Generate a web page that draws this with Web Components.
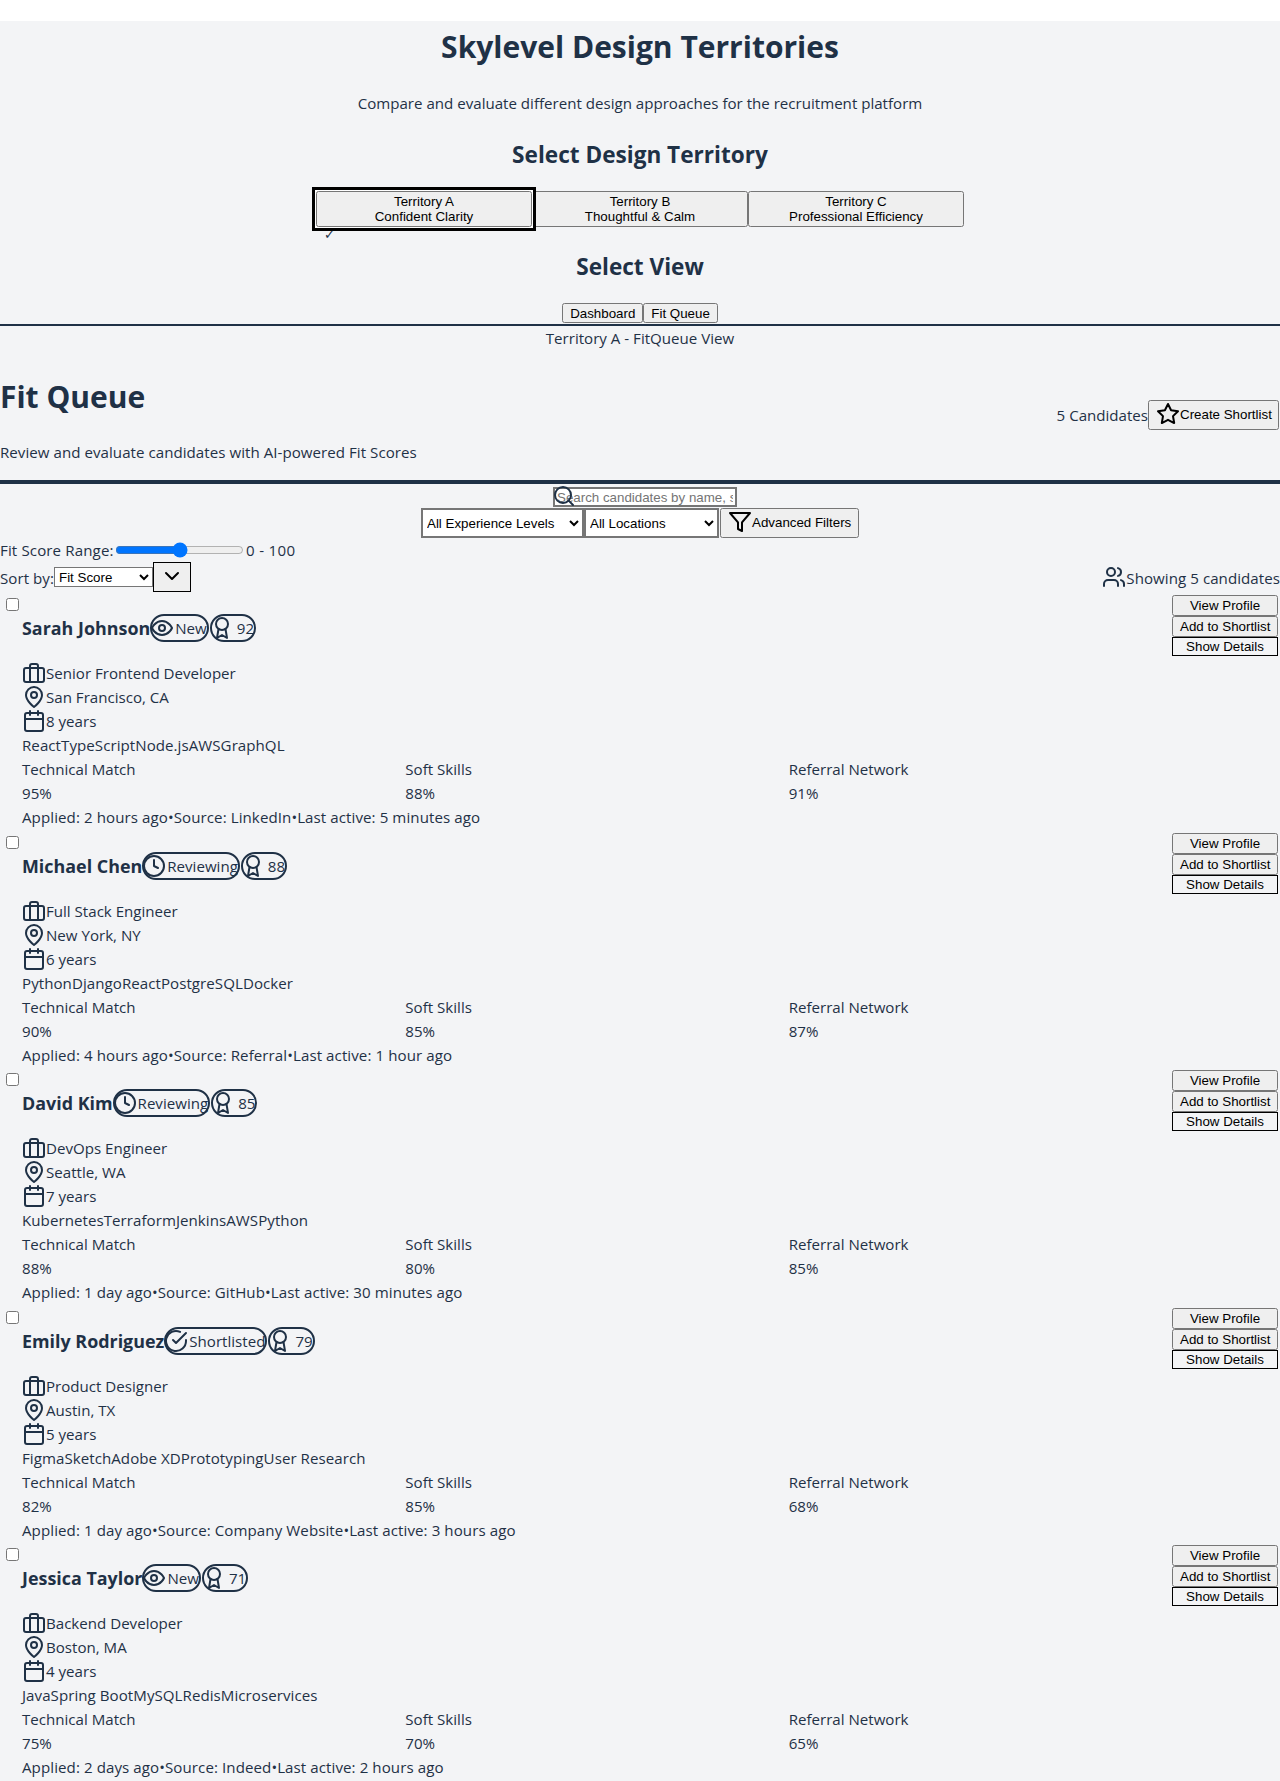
<!DOCTYPE html>
<html lang="en"><head><meta charset="utf-8"><title>Skylevel Design Territories</title>
<style>
html,body{margin:0;padding:0;background:#fff}
body{padding-top:21px}
sky-app{display:block}
</style></head><body>
<sky-app></sky-app>
<script>
const ICONS={
briefcase:'<rect x="2" y="7" width="20" height="14" rx="2"/><path d="M16 21V5a2 2 0 0 0-2-2h-4a2 2 0 0 0-2 2v16"/>',
pin:'<path d="M20 10c0 6-8 12-8 12s-8-6-8-12a8 8 0 0 1 16 0Z"/><circle cx="12" cy="10" r="3"/>',
calendar:'<rect x="3" y="4" width="18" height="18" rx="2"/><path d="M16 2v4M8 2v4M3 10h18"/>',
award:'<circle cx="12" cy="8" r="6"/><path d="M15.477 12.89 17 22l-5-3-5 3 1.523-9.11"/>',
eye:'<path d="M2 12s3-7 10-7 10 7 10 7-3 7-10 7-10-7-10-7Z"/><circle cx="12" cy="12" r="3"/>',
clock:'<circle cx="12" cy="12" r="10"/><path d="M12 6v6l4 2"/>',
check:'<path d="M22 11.08V12a10 10 0 1 1-5.93-9.14"/><path d="M22 4 12 14.01l-3-3"/>',
star:'<path d="M12 2l3.09 6.26L22 9.27l-5 4.87 1.18 6.88L12 17.77l-6.18 3.25L7 14.14 2 9.27l6.91-1.01L12 2Z"/>',
filter:'<path d="M22 3H2l8 9.46V19l4 2v-8.54L22 3Z"/>',
search:'<circle cx="11" cy="11" r="8"/><path d="m21 21-4.35-4.35"/>',
users:'<path d="M16 21v-2a4 4 0 0 0-4-4H6a4 4 0 0 0-4 4v2"/><circle cx="9" cy="7" r="4"/><path d="M22 21v-2a4 4 0 0 0-3-3.87M16 3.13a4 4 0 0 1 0 7.75"/>',
chevron:'<path d="m6 9 6 6 6-6"/>'
};
class SkyIcon extends HTMLElement{
  connectedCallback(){
    if(this.shadowRoot)return;
    const s=this.attachShadow({mode:'open'});
    s.innerHTML=`<style>:host{display:block;width:24px;height:24px;flex:none}svg{display:block}</style>
    <svg width="24" height="24" viewBox="0 0 24 24" fill="none" stroke="currentColor" stroke-width="2" stroke-linecap="round" stroke-linejoin="round">${ICONS[this.getAttribute('name')]}</svg>`;
  }
}
customElements.define('sky-icon',SkyIcon);

const BTN=`button{font:13.333px/15px "Liberation Sans",Arial,sans-serif;color:#000;margin:0;padding:1px 6px;white-space:nowrap}`;

class StatusPill extends HTMLElement{
  connectedCallback(){
    if(this.shadowRoot)return;
    const s=this.attachShadow({mode:'open'});
    s.innerHTML=`<style>
    :host{display:inline-flex;align-items:center;height:28px;box-sizing:border-box;border:2px solid currentColor;border-radius:9999px;flex:none}
    sky-icon{margin-left:-2px}
    span{padding-left:1px;white-space:pre}
    :host([score]) span{padding-left:3px}
    </style><sky-icon name="${this.getAttribute('icon')}"></sky-icon><span><slot></slot></span>`;
  }
}
customElements.define('status-pill',StatusPill);

class InfoLine extends HTMLElement{
  connectedCallback(){
    if(this.shadowRoot)return;
    const s=this.attachShadow({mode:'open'});
    s.innerHTML=`<style>:host{display:flex;align-items:center;height:24px}</style><sky-icon name="${this.getAttribute('icon')}"></sky-icon><slot></slot>`;
  }
}
customElements.define('info-line',InfoLine);

class CandidateCard extends HTMLElement{
  connectedCallback(){
    if(this.shadowRoot)return;
    const a=k=>this.getAttribute(k);
    const s=this.attachShadow({mode:'open'});
    const m=a('metrics').split(',');
    s.innerHTML=`<style>
    :host{display:flex;height:237.5px;box-sizing:border-box}
    .main{flex:1;min-width:0}
    .tick{height:22px;box-sizing:border-box;padding-top:6px}
    input{display:block;width:13px;height:13px;margin:0 0 0 6px}
    .body{padding-left:22px}
    .head{display:flex;align-items:center;height:28px;margin-bottom:19px}
    h3{margin:0;font-size:17.9px;font-weight:700;line-height:28px;white-space:nowrap}
    status-pill+status-pill{margin-left:1px}
    .line{height:24px;line-height:24px;white-space:nowrap}
    .skills{letter-spacing:.05px}
    .meta{letter-spacing:.08px}
    .metrics{display:grid;grid-template-columns:repeat(3,1fr)}
    .metrics div{height:24px;line-height:24px}
    .actions{width:106px;margin:3px 2px 0 0;display:flex;flex-direction:column}
    ${BTN}
    .plain{border:1px solid #000;background:transparent;border-radius:0}
    </style>
    <div class="main">
      <div class="tick"><input type="checkbox" aria-label="Select ${a('name')}"></div>
      <div class="body">
        <div class="head"><h3>${a('name')}</h3><status-pill icon="${a('sicon')}">${a('status')}</status-pill><status-pill icon="award" score>${a('score')}</status-pill></div>
        <info-line icon="briefcase">${a('role')}</info-line>
        <info-line icon="pin">${a('place')}</info-line>
        <info-line icon="calendar">${a('years')}</info-line>
        <div class="line skills">${a('skills')}</div>
        <div class="metrics"><div>Technical Match</div><div>Soft Skills</div><div>Referral Network</div><div>${m[0]}%</div><div>${m[1]}%</div><div>${m[2]}%</div></div>
        <div class="line meta">Applied: ${a('applied')}•Source: ${a('source')}•Last active: ${a('active')}</div>
      </div>
    </div>
    <div class="actions"><button>View Profile</button><button>Add to Shortlist</button><button class="plain">Show Details</button></div>`;
  }
}
customElements.define('candidate-card',CandidateCard);

class TerritoryPicker extends HTMLElement{
  connectedCallback(){
    if(this.shadowRoot)return;
    const s=this.attachShadow({mode:'open'});
    s.innerHTML=`<style>
    :host{display:grid;grid-template-columns:repeat(3,216px);justify-content:center;height:36px}
    ${BTN}
    button{height:36px;position:relative;padding:1px 6px;white-space:normal}
    .on{z-index:1;outline:3px solid #000;outline-offset:1px;box-shadow:0 0 0 1px #fff}
    .wrap{position:relative;display:block}
    .wrap button{width:100%;display:block}
    .mark{position:absolute;left:8px;top:38px;font:13px/12px "DejaVu Sans",sans-serif;z-index:2;color:inherit}
    </style>
    <span class="wrap"><button class="on">Territory A<br>Confident Clarity</button><span class="mark">✓</span></span>
    <span class="wrap"><button>Territory B<br>Thoughtful &amp; Calm</button></span>
    <span class="wrap"><button>Territory C<br>Professional Efficiency</button></span>`;
  }
}
customElements.define('territory-picker',TerritoryPicker);

class QueueFilters extends HTMLElement{
  connectedCallback(){
    if(this.shadowRoot)return;
    const s=this.attachShadow({mode:'open'});
    s.innerHTML=`<style>
    :host{display:block}
    ${BTN}
    .search{display:flex;justify-content:center;padding-top:3px;height:21px}
    .sbox{position:relative;width:184px;height:20px;margin-left:10px}
    .sbox input{box-sizing:border-box;width:184px;height:20px;border:2px solid #767676;padding:1px 2px;margin:0;background:#fff;font:13.333px "Liberation Sans",Arial,sans-serif;display:block;border-radius:0}
    .sbox input::placeholder{color:#757575}
    .sbox sky-icon{position:absolute;left:-1px;top:-3px;color:var(--ink)}
    .row{display:flex;justify-content:center;height:30px}
    select{font:13.333px "Liberation Sans",Arial,sans-serif;color:#000;background-color:#fff;margin:0;border-radius:0}
    .row select{border:2px solid #767676;height:30px;box-sizing:border-box;padding:0}
    .exp{width:163px}.loc{width:135px}
    .adv{display:flex;align-items:center;margin-left:1px;height:30px;width:139px;box-sizing:border-box;padding:0 6px 2px}
    .range{display:flex;align-items:center;height:24px}
    .range span:first-child{width:113px;letter-spacing:.12px;white-space:nowrap}
    .range span:last-child{letter-spacing:.3px}
    .range input{margin:0 2px;width:129px;accent-color:#0075ff}
    .sort{display:flex;justify-content:space-between;height:30px}
    .sort>div{display:flex;align-items:center}
    .sort span{padding-top:1px;letter-spacing:.05px}
    .sort select{width:99px;height:20px;border:1px solid #767676;box-sizing:border-box;padding:0;margin-bottom:0}
    .chev{width:38px;height:30px;box-sizing:border-box;border:1px solid #000;border-radius:0;padding:1px 6px 3px;display:block}
    </style>
    <div class="search"><div class="sbox"><input placeholder="Search candidates by name, skills, or title..."><sky-icon name="search"></sky-icon></div></div>
    <div class="row">
      <select class="exp"><option>All Experience Levels</option></select>
      <select class="loc"><option>All Locations</option></select>
      <button class="adv"><sky-icon name="filter"></sky-icon>Advanced Filters</button>
    </div>
    <div class="range"><span>Fit Score Range:</span><input type="range" min="0" max="100" value="50"><span>0 - 100</span></div>
    <div class="sort">
      <div><span>Sort by:</span><select><option>Fit Score</option></select><button class="chev"><sky-icon name="chevron"></sky-icon></button></div>
      <div><sky-icon name="users"></sky-icon><span>Showing 5 candidates</span></div>
    </div>`;
  }
}
customElements.define('queue-filters',QueueFilters);

const DATA=[
 {name:'Sarah Johnson',sicon:'eye',status:'New',score:92,role:'Senior Frontend Developer',place:'San Francisco, CA',years:'8 years',skills:'ReactTypeScriptNode.jsAWSGraphQL',metrics:'95,88,91',applied:'2 hours ago',source:'LinkedIn',active:'5 minutes ago'},
 {name:'Michael Chen',sicon:'clock',status:'Reviewing',score:88,role:'Full Stack Engineer',place:'New York, NY',years:'6 years',skills:'PythonDjangoReactPostgreSQLDocker',metrics:'90,85,87',applied:'4 hours ago',source:'Referral',active:'1 hour ago'},
 {name:'David Kim',sicon:'clock',status:'Reviewing',score:85,role:'DevOps Engineer',place:'Seattle, WA',years:'7 years',skills:'KubernetesTerraformJenkinsAWSPython',metrics:'88,80,85',applied:'1 day ago',source:'GitHub',active:'30 minutes ago'},
 {name:'Emily Rodriguez',sicon:'check',status:'Shortlisted',score:79,role:'Product Designer',place:'Austin, TX',years:'5 years',skills:'FigmaSketchAdobe XDPrototypingUser Research',metrics:'82,85,68',applied:'1 day ago',source:'Company Website',active:'3 hours ago'},
 {name:'Jessica Taylor',sicon:'eye',status:'New',score:71,role:'Backend Developer',place:'Boston, MA',years:'4 years',skills:'JavaSpring BootMySQLRedisMicroservices',metrics:'75,70,65',applied:'2 days ago',source:'Indeed',active:'2 hours ago'}
];
const esc=v=>String(v).replace(/&/g,'&amp;').replace(/"/g,'&quot;');

class SkyApp extends HTMLElement{
  connectedCallback(){
    if(this.shadowRoot)return;
    const s=this.attachShadow({mode:'open'});
    const cards=DATA.map(d=>`<candidate-card ${Object.entries(d).map(([k,v])=>`${k}="${esc(v)}"`).join(' ')}></candidate-card>`).join('');
    s.innerHTML=`<style>
    :host{display:block;--ink:#1f3146;background:#f3f4f6;color:var(--ink);font:15.1px/24px "Open Sans",sans-serif;min-height:1760px;text-align:left}
    ${BTN}
    h1,h2,p{margin:0}
    h1{font-size:30px;line-height:36px;font-weight:700}
    h2{font-size:22.6px;line-height:32px;font-weight:700}
    .center{text-align:center}
    .t1{padding-top:8px}
    .p1{margin-top:26px}
    .h2a{margin-top:24px;margin-bottom:20px}
    .h2b{margin-top:24px;margin-bottom:20px}
    .tabs{display:flex;justify-content:center;height:20px;margin-bottom:1px}
    .tabs button{height:20px;padding:2px 6px 0;line-height:14px}
    .rule{height:2px;background:var(--ink)}
    .sub{height:24px;line-height:24px}
    .qhead{display:flex;justify-content:space-between;align-items:center;height:130px}
    .qhead>.l{padding-top:29px;padding-bottom:16px}
    .qhead>.l p{margin-top:25px;letter-spacing:.04px}
    .qhead>.r{display:flex;align-items:center;margin-right:1px}
    .cs{display:flex;align-items:center;height:30px;width:131px;box-sizing:border-box;padding:0 6px 2px}
    .thick{height:4px;background:var(--ink)}
    </style>
    <h1 class="center t1">Skylevel Design Territories</h1>
    <p class="center p1">Compare and evaluate different design approaches for the recruitment platform</p>
    <h2 class="center h2a">Select Design Territory</h2>
    <territory-picker></territory-picker>
    <h2 class="center h2b">Select View</h2>
    <div class="tabs"><button>Dashboard</button><button>Fit Queue</button></div>
    <div class="rule"></div>
    <div class="center sub">Territory A - FitQueue View</div>
    <div class="qhead">
      <div class="l"><h1>Fit Queue</h1><p>Review and evaluate candidates with AI-powered Fit Scores</p></div>
      <div class="r"><span>5 Candidates</span><button class="cs"><sky-icon name="star"></sky-icon>Create Shortlist</button></div>
    </div>
    <div class="thick"></div>
    <queue-filters></queue-filters>
    ${cards}`;
  }
}
customElements.define('sky-app',SkyApp);
</script>
</body></html>
